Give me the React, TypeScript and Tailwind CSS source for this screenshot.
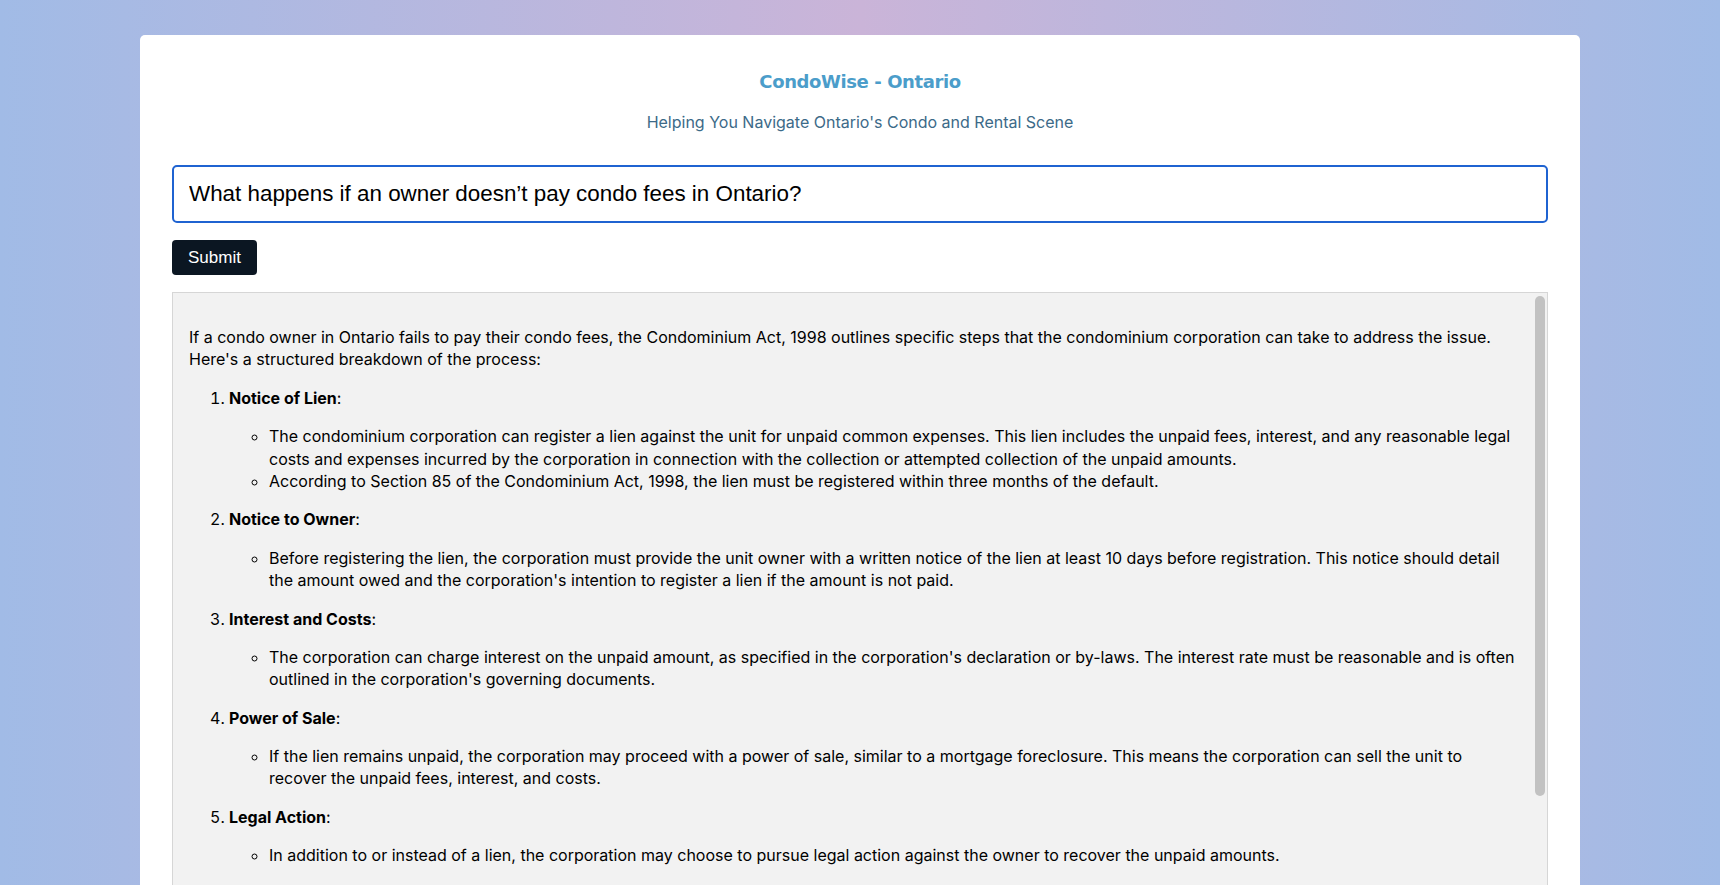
import React from 'react';

type Section = { title: string; points: string[] };

const sections: Section[] = [
  {
    title: 'Notice of Lien',
    points: [
      'The condominium corporation can register a lien against the unit for unpaid common expenses. This lien includes the unpaid fees, interest, and any reasonable legal costs and expenses incurred by the corporation in connection with the collection or attempted collection of the unpaid amounts.',
      'According to Section 85 of the Condominium Act, 1998, the lien must be registered within three months of the default.',
    ],
  },
  {
    title: 'Notice to Owner',
    points: [
      "Before registering the lien, the corporation must provide the unit owner with a written notice of the lien at least 10 days before registration. This notice should detail the amount owed and the corporation's intention to register a lien if the amount is not paid.",
    ],
  },
  {
    title: 'Interest and Costs',
    points: [
      "The corporation can charge interest on the unpaid amount, as specified in the corporation's declaration or by-laws. The interest rate must be reasonable and is often outlined in the corporation's governing documents.",
    ],
  },
  {
    title: 'Power of Sale',
    points: [
      'If the lien remains unpaid, the corporation may proceed with a power of sale, similar to a mortgage foreclosure. This means the corporation can sell the unit to recover the unpaid fees, interest, and costs.',
    ],
  },
  {
    title: 'Legal Action',
    points: [
      'In addition to or instead of a lien, the corporation may choose to pursue legal action against the owner to recover the unpaid amounts.',
    ],
  },
];

function Answer() {
  return (
    <div className="relative mt-[17px] h-[640px] overflow-hidden border border-[#d6d6d6] bg-[#f2f2f2] pl-4 pr-[28px] pt-[17px] font-['Inter',sans-serif] text-[16px] leading-[1.4] text-black">
      <p className="my-4">
        If a condo owner in Ontario fails to pay their condo fees, the Condominium Act, 1998 outlines specific steps that
        the condominium corporation can take to address the issue. Here's a structured breakdown of the process:
      </p>
      <ol className="list-decimal pl-10">
        {sections.map((s) => (
          <li key={s.title} className="my-4">
            <p className="mb-4">
              <strong className="font-bold">{s.title}</strong>:
            </p>
            <ul className="list-[circle] pl-10">
              {s.points.map((pt) => (
                <li key={pt}>{pt}</li>
              ))}
            </ul>
          </li>
        ))}
      </ol>
      {/* scrollbar */}
      <div className="absolute right-[2px] top-[3px] h-[500px] w-[10px] rounded-full bg-[#c2c2c2]" />
    </div>
  );
}

export default function App() {
  return (
    <div className="h-screen overflow-hidden bg-[linear-gradient(90deg,#a1bbe6_0%,#cab4d8_50%,#a1bbe6_100%)] pt-[35px]">
      <div className="mx-auto w-[1440px] rounded-t-[5px] bg-white px-8 pt-[35px] pb-10">
        <h1 className="text-center font-['DejaVu_Sans',sans-serif] text-[18px] font-bold leading-[24px] tracking-[-0.4px] text-[#4b9dca]">
          CondoWise - Ontario
        </h1>
        <p className="mt-[16px] text-center font-['Inter',sans-serif] text-[16px] leading-[24px] text-[#3c6a88]">
          Helping You Navigate Ontario's Condo and Rental Scene
        </p>
        <input
          readOnly
          defaultValue="What happens if an owner doesn’t pay condo fees in Ontario?"
          className="mt-[31px] block h-[58px] w-full rounded-[5px] border-2 border-[#1f63d1] bg-white px-[15px] font-['Liberation_Sans',Arial,sans-serif] text-[22.4px] text-black outline-none"
        />
        <button className="mt-[17px] block h-[35px] rounded-[4px] bg-[#0b1622] px-4 font-['Liberation_Sans',Arial,sans-serif] text-[17px] text-white">
          Submit
        </button>
        <Answer />
      </div>
    </div>
  );
}
